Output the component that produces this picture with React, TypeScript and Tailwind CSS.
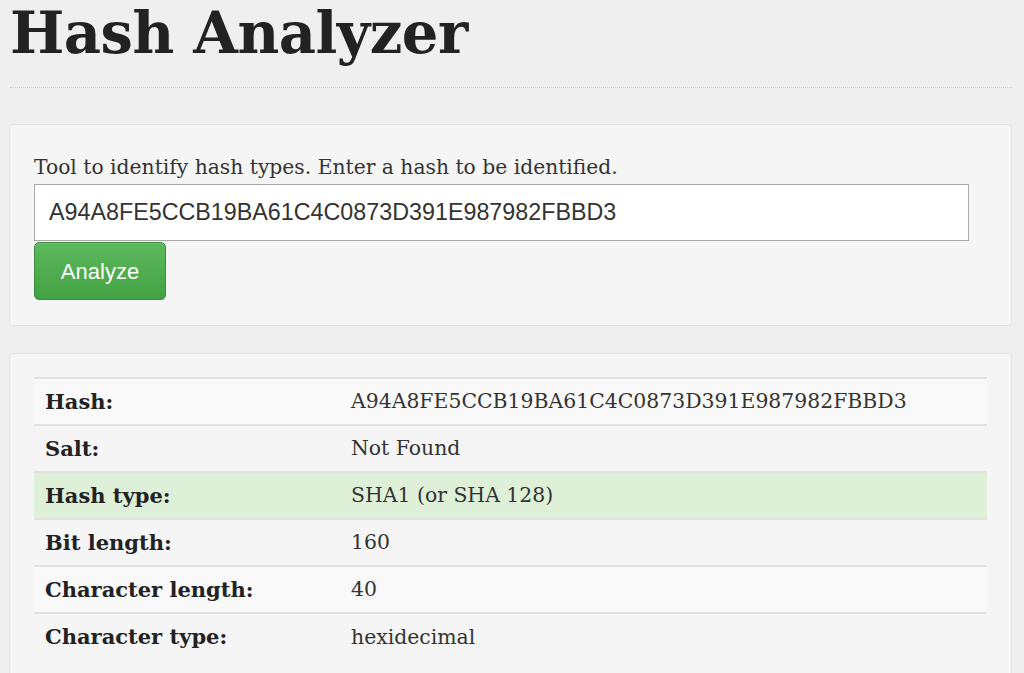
import React from 'react';

const rows: {label: string; value: string; success?: boolean}[] = [
  {label: 'Hash:', value: 'A94A8FE5CCB19BA61C4C0873D391E987982FBBD3'},
  {label: 'Salt:', value: 'Not Found'},
  {label: 'Hash type:', value: 'SHA1 (or SHA 128)', success: true},
  {label: 'Bit length:', value: '160'},
  {label: 'Character length:', value: '40'},
  {label: 'Character type:', value: 'hexidecimal'},
];

export default function App() {
  return (
    <div className="min-h-[673px] bg-[#efefef] pl-[9px] pr-[12px] font-['DejaVu_Serif',Georgia,serif] text-[#333] overflow-hidden">
      <h1 className="pl-[1px] pt-[2px] text-[57.5px] leading-[62px] font-bold text-[#222] tracking-[-0.5px]">
        Hash Analyzer
      </h1>
      <div className="mt-[23px] ml-[1px] border-t border-dotted border-[#cfcfcf]" />

      <div className="mt-[36px] rounded-[4px] border border-[#e3e3e3] bg-[#f5f5f5] px-[24px] pt-[29px] pb-[25px]">
        <p className="text-[20.3px] leading-[26px] text-[#333]">
          Tool to identify hash types. Enter a hash to be identified.
        </p>
        <input
          type="text"
          readOnly
          value="A94A8FE5CCB19BA61C4C0873D391E987982FBBD3"
          className="mt-[4px] block h-[57px] w-[935px] border border-[#a9a9a9] bg-white px-[14px] font-['Liberation_Sans',Arial,sans-serif] text-[23.3px] text-[#333] outline-none"
        />
        <button className="mt-[1px] flex h-[58px] w-[132px] items-center justify-center rounded-[5px] border border-[#3d8b3d] bg-gradient-to-b from-[#5cb85c] to-[#43a243] font-['Liberation_Sans',Arial,sans-serif] text-[22px] text-white shadow-[inset_0_1px_0_rgba(255,255,255,0.15)]">
          Analyze
        </button>
      </div>

      <div className="mt-[27px] rounded-[4px] border border-[#e3e3e3] bg-[#f5f5f5] px-[24px] pt-[23px] pb-[24px]">
        <table className="w-[953px] border-collapse text-[21px]">
          <tbody>
            {rows.map((r, i) => (
              <tr
                key={r.label}
                className={
                  r.success
                    ? 'bg-[#dff0d8]'
                    : i % 2 === 0
                    ? 'bg-[#f9f9f9]'
                    : 'bg-transparent'
                }
              >
                <td className="h-[47px] w-[306px] border-t-2 border-[#e2e2e2] px-[11px] align-middle font-bold text-[#222]">
                  {r.label}
                </td>
                <td className="h-[47px] border-t-2 border-[#e2e2e2] px-[11px] align-middle text-[20.4px] text-[#333]">
                  {r.value}
                </td>
              </tr>
            ))}
          </tbody>
        </table>
      </div>
    </div>
  );
}
